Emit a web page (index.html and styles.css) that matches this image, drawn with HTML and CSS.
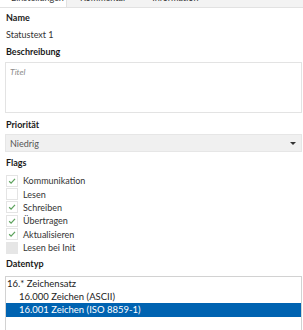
FILE: index.html
```html
<!DOCTYPE html>
<html>
<head>
<meta charset="utf-8">
<link rel="stylesheet" href="styles.css">
</head>
<body>
<div class="tabs">
  <div class="tab active">Einstellungen</div>
  <div class="tab">Kommentar</div>
  <div class="tab">Information</div>
</div>
<div class="panel">
  <div class="label">Name</div>
  <div class="value">Statustext 1</div>
  <div class="label">Beschreibung</div>
  <div class="textarea"><span class="placeholder">Titel</span></div>
  <div class="label prio">Priorität</div>
  <div class="select"><span>Niedrig</span><span class="caret"></span></div>
  <div class="label flags-label">Flags</div>
  <div class="flags">
    <div class="flag"><span class="box checked"><svg viewBox="0 0 12 12"><path d="M2.6 6.3 L4.9 8.6 L9.6 3.4" /></svg></span>Kommunikation</div>
    <div class="flag"><span class="box"></span>Lesen</div>
    <div class="flag"><span class="box checked"><svg viewBox="0 0 12 12"><path d="M2.6 6.3 L4.9 8.6 L9.6 3.4" /></svg></span>Schreiben</div>
    <div class="flag"><span class="box checked"><svg viewBox="0 0 12 12"><path d="M2.6 6.3 L4.9 8.6 L9.6 3.4" /></svg></span>Übertragen</div>
    <div class="flag"><span class="box checked"><svg viewBox="0 0 12 12"><path d="M2.6 6.3 L4.9 8.6 L9.6 3.4" /></svg></span>Aktualisieren</div>
    <div class="flag"><span class="box disabled"></span>Lesen bei Init</div>
  </div>
  <div class="label datatype">Datentyp</div>
  <div class="listbox">
    <div class="item">16.* Zeichensatz</div>
    <div class="item sub">16.000 Zeichen (ASCII)</div>
    <div class="item sub selected">16.001 Zeichen (ISO 8859-1)</div>
  </div>
</div>
</body>
</html>
```

FILE: styles.css
```css
html, body {
  margin: 0;
  padding: 0;
  background: #ffffff;
  overflow: hidden;
}
body {
  font-family: Lato, "Noto Sans", sans-serif;
  font-size: 9px;
  color: #1f1f1f;
  width: 303px;
  height: 330px;
}
.tabs {
  display: flex;
  align-items: flex-end;
  height: 7px;
  overflow: hidden;
  background: #f3f3f3;
  border-bottom: 1px solid #e2e2e2;
}
.tab {
  line-height: 12px;
  padding: 0 13px 3px 13px;
  color: #333;
  flex: none;
}
.tab.active {
  background: #ffffff;
  width: 42px;
  border-right: 1px solid #e2e2e2;
  height: 20px;
  padding-left: 11px;
  display: flex;
  align-items: flex-end;
}
.panel {
  padding: 3px 1px 0 5px;
  display: flex;
  flex-direction: column;
}
.label {
  font-weight: bold;
  line-height: 13px;
  padding-left: 1px;
  color: #1a1a1a;
}
.value {
  line-height: 13px;
  margin: 4px 0;
  padding-left: 1px;
  color: #333;
}
.textarea {
  margin-top: 4px;
  border: 1px solid #e3e3e3;
  padding: 3px 4px;
  box-sizing: border-box;
  height: 51px;
}
.placeholder {
  font-style: italic;
  color: #8c8c8c;
  font-size: 8.5px;
}
.prio {
  margin-top: 5px;
}
.select {
  margin-top: 3px;
  height: 18px;
  box-sizing: border-box;
  background: #f0f0f0;
  border: 1px solid #e6e6e6;
  display: flex;
  align-items: center;
  justify-content: space-between;
  padding: 0 5px 0 4px;
  color: #555;
}
.caret {
  width: 0;
  height: 0;
  border-left: 3px solid transparent;
  border-right: 3px solid transparent;
  border-top: 3px solid #333;
}
.flags-label {
  margin-top: 4px;
}
.flags {
  margin-top: 5px;
  display: grid;
  grid-auto-rows: 13.4px;
}
.flag {
  display: flex;
  align-items: center;
  gap: 5px;
  color: #333;
}
.box {
  width: 12px;
  height: 12px;
  box-sizing: border-box;
  border: 1px solid #e4e4e4;
  margin-left: 1px;
  background: #fff;
  display: flex;
}
.box svg {
  width: 10px;
  height: 10px;
}
.box svg path {
  fill: none;
  stroke: #5ea35e;
  stroke-width: 1.5;
}
.box.disabled {
  background: #e6e6e6;
  border-color: #e6e6e6;
}
.datatype {
  margin-top: 3px;
}
.listbox {
  margin-top: 6px;
  border: 1px solid #d2d2d2;
  height: 70px;
}
.item {
  font-size: 9.5px;
  line-height: 13px;
  height: 13px;
  color: #222;
  padding-left: 1px;
}
.item.sub {
  padding-left: 13px;
}
.item.selected {
  background: #0063b1;
  color: #ffffff;
  height: 14px;
  line-height: 14px;
}
```
